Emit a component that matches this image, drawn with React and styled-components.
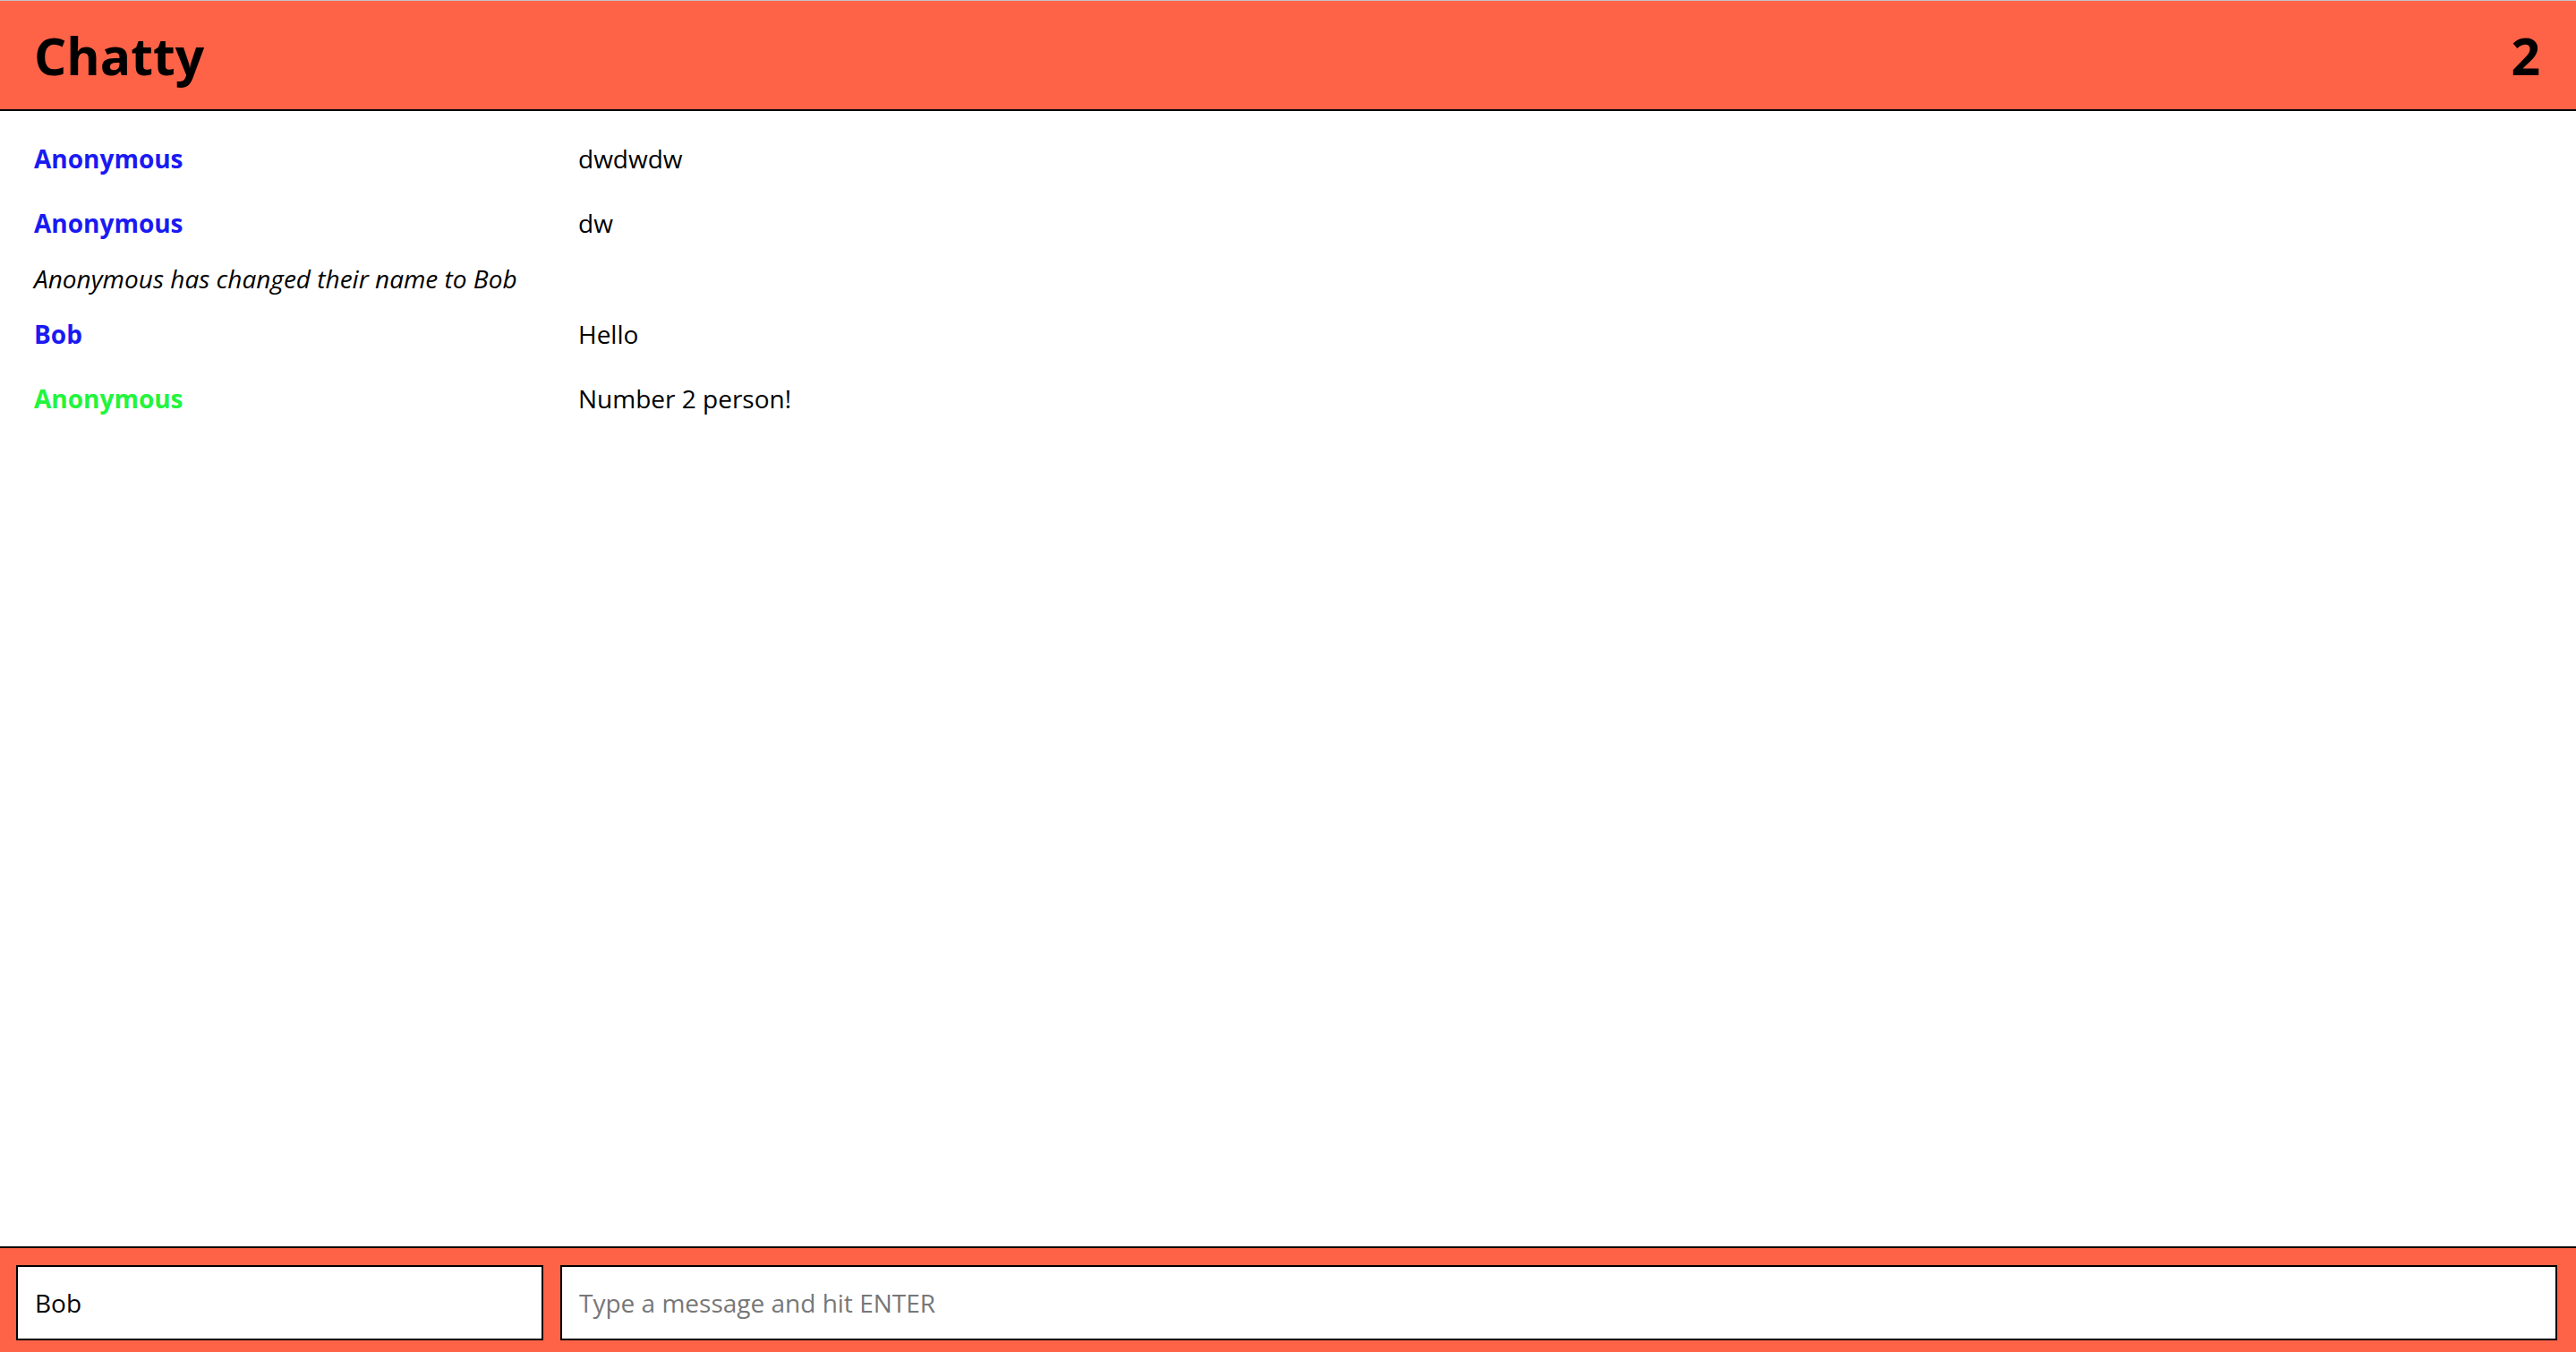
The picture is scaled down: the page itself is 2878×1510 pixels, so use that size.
import React from "react";
import styled, { createGlobalStyle } from "styled-components";

const GlobalStyle = createGlobalStyle`
  * {
    box-sizing: border-box;
  }
  html, body {
    margin: 0;
    padding: 0;
    height: 100%;
  }
  body {
    font-family: "Open Sans", "Liberation Sans", sans-serif;
    font-size: 28px;
    color: #000;
    background: #fff;
  }
`;

const Page = styled.div`
  display: flex;
  flex-direction: column;
  height: 100vh;
`;

const NavBar = styled.nav`
  display: flex;
  align-items: center;
  justify-content: space-between;
  height: 124px;
  padding: 0 40px 0 38px;
  background: tomato;
  border-top: 1px solid #c4c4c4;
  border-bottom: 2px solid #000;
`;

const Brand = styled.span`
  font-size: 57px;
  font-weight: 700;
  line-height: 1;
  margin-top: 2px;
`;

const UserCount = styled.span`
  font-size: 57px;
  font-weight: 700;
  line-height: 1;
  margin-top: 2px;
`;

const MessageList = styled.main`
  flex: 1;
  display: flex;
  flex-direction: column;
  gap: 14px;
  padding: 24px 38px;
  overflow-y: auto;
`;

const Message = styled.div`
  display: flex;
  padding: 10px 0;
  line-height: 38px;
`;

const Username = styled.span`
  flex: 0 0 608px;
  font-weight: 700;
  color: ${(p) => p.$color};
`;

const Content = styled.span`
  flex: 1;
`;

const SystemMessage = styled.div`
  font-style: italic;
  line-height: 38px;
`;

const ChatBar = styled.footer`
  display: flex;
  gap: 19px;
  padding: 19px 21px 13px 18px;
  background: tomato;
  border-top: 2px solid #000;
`;

const Input = styled.input`
  height: 84px;
  padding: 0 19px;
  border: 2px solid #000;
  background: #fff;
  font-family: inherit;
  font-size: 28px;
  color: #000;
  outline: none;
  flex: ${(p) => (p.$grow ? "1" : "0 0 589px")};

  &::placeholder {
    color: #777;
  }
`;

const messages = [
  { type: "message", user: "Anonymous", color: "#1a1af2", text: "dwdwdw" },
  { type: "message", user: "Anonymous", color: "#1a1af2", text: "dw" },
  { type: "system", text: "Anonymous has changed their name to Bob" },
  { type: "message", user: "Bob", color: "#1a1af2", text: "Hello" },
  { type: "message", user: "Anonymous", color: "#22f53c", text: "Number 2 person!" },
];

const App = () => {
  return (
    <>
      <GlobalStyle />
      <Page>
        <NavBar>
          <Brand>Chatty</Brand>
          <UserCount>2</UserCount>
        </NavBar>
        <MessageList>
          {messages.map((m, i) =>
            m.type === "system" ? (
              <SystemMessage key={i}>{m.text}</SystemMessage>
            ) : (
              <Message key={i}>
                <Username $color={m.color}>{m.user}</Username>
                <Content>{m.text}</Content>
              </Message>
            )
          )}
        </MessageList>
        <ChatBar>
          <Input defaultValue="Bob" />
          <Input $grow placeholder="Type a message and hit ENTER" />
        </ChatBar>
      </Page>
    </>
  );
};

export default App;
